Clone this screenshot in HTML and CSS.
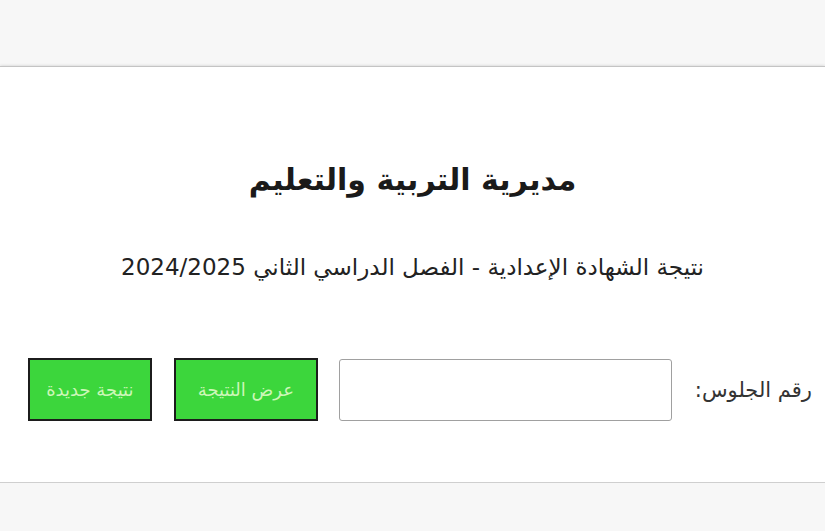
FILE: index.html
```html
<!DOCTYPE html>
<html lang="ar" dir="rtl">
<head>
<meta charset="utf-8">
<title>مديرية التربية والتعليم</title>
<link rel="stylesheet" href="styles.css">
</head>
<body>
<div class="top"></div>
<main class="card">
  <h1 class="title">مديرية التربية والتعليم</h1>
  <p class="subtitle">نتيجة الشهادة الإعدادية - الفصل الدراسي الثاني 2024/2025</p>
  <form class="form">
    <label class="label" for="seat">رقم الجلوس:</label>
    <input class="input" id="seat" type="text">
    <button type="button" class="btn btn-show">عرض النتيجة</button>
    <button type="button" class="btn btn-new">نتيجة جديدة</button>
  </form>
</main>
</body>
</html>
```
FILE: styles.css
```css
html, body {
  margin: 0;
  padding: 0;
  background: #f7f7f7;
  font-family: "DejaVu Sans", "Noto Sans", sans-serif;
  color: #222;
}
.top {
  height: 66px;
}
.card {
  background: #fff;
  height: 417px;
  box-sizing: border-box;
  border-top: 1px solid #c4c4c4;
  border-bottom: 1px solid #cfcfcf;
  box-shadow: 0 0 3px rgba(0,0,0,0.18);
  text-align: center;
  padding-top: 95px;
}
.title {
  margin: 0;
  font-size: 30px;
  font-weight: bold;
  line-height: 36px;
  color: #1a1a1a;
}
.subtitle {
  margin: 55px 0 0;
  font-size: 23px;
  line-height: 28px;
  color: #222;
}
.form {
  display: flex;
  align-items: center;
  margin-top: 77px;
  padding-right: 13px;
}
.label {
  font-size: 21px;
  color: #333;
  margin-left: 23px;
}
.input {
  width: 333px;
  height: 62px;
  box-sizing: border-box;
  border: 1px solid #a0a0a0;
  border-radius: 3px;
  margin: 0 0 0 21px;
  padding: 0 8px;
}
.btn {
  height: 63px;
  box-sizing: border-box;
  background: #3cd63c;
  border: 2px solid #1c1c1c;
  color: #cdf7b8;
  font-family: "DejaVu Sans", sans-serif;
  font-size: 18px;
  padding: 0;
}
.btn-show {
  width: 144px;
  margin-left: 22px;
}
.btn-new {
  width: 124px;
}
```
